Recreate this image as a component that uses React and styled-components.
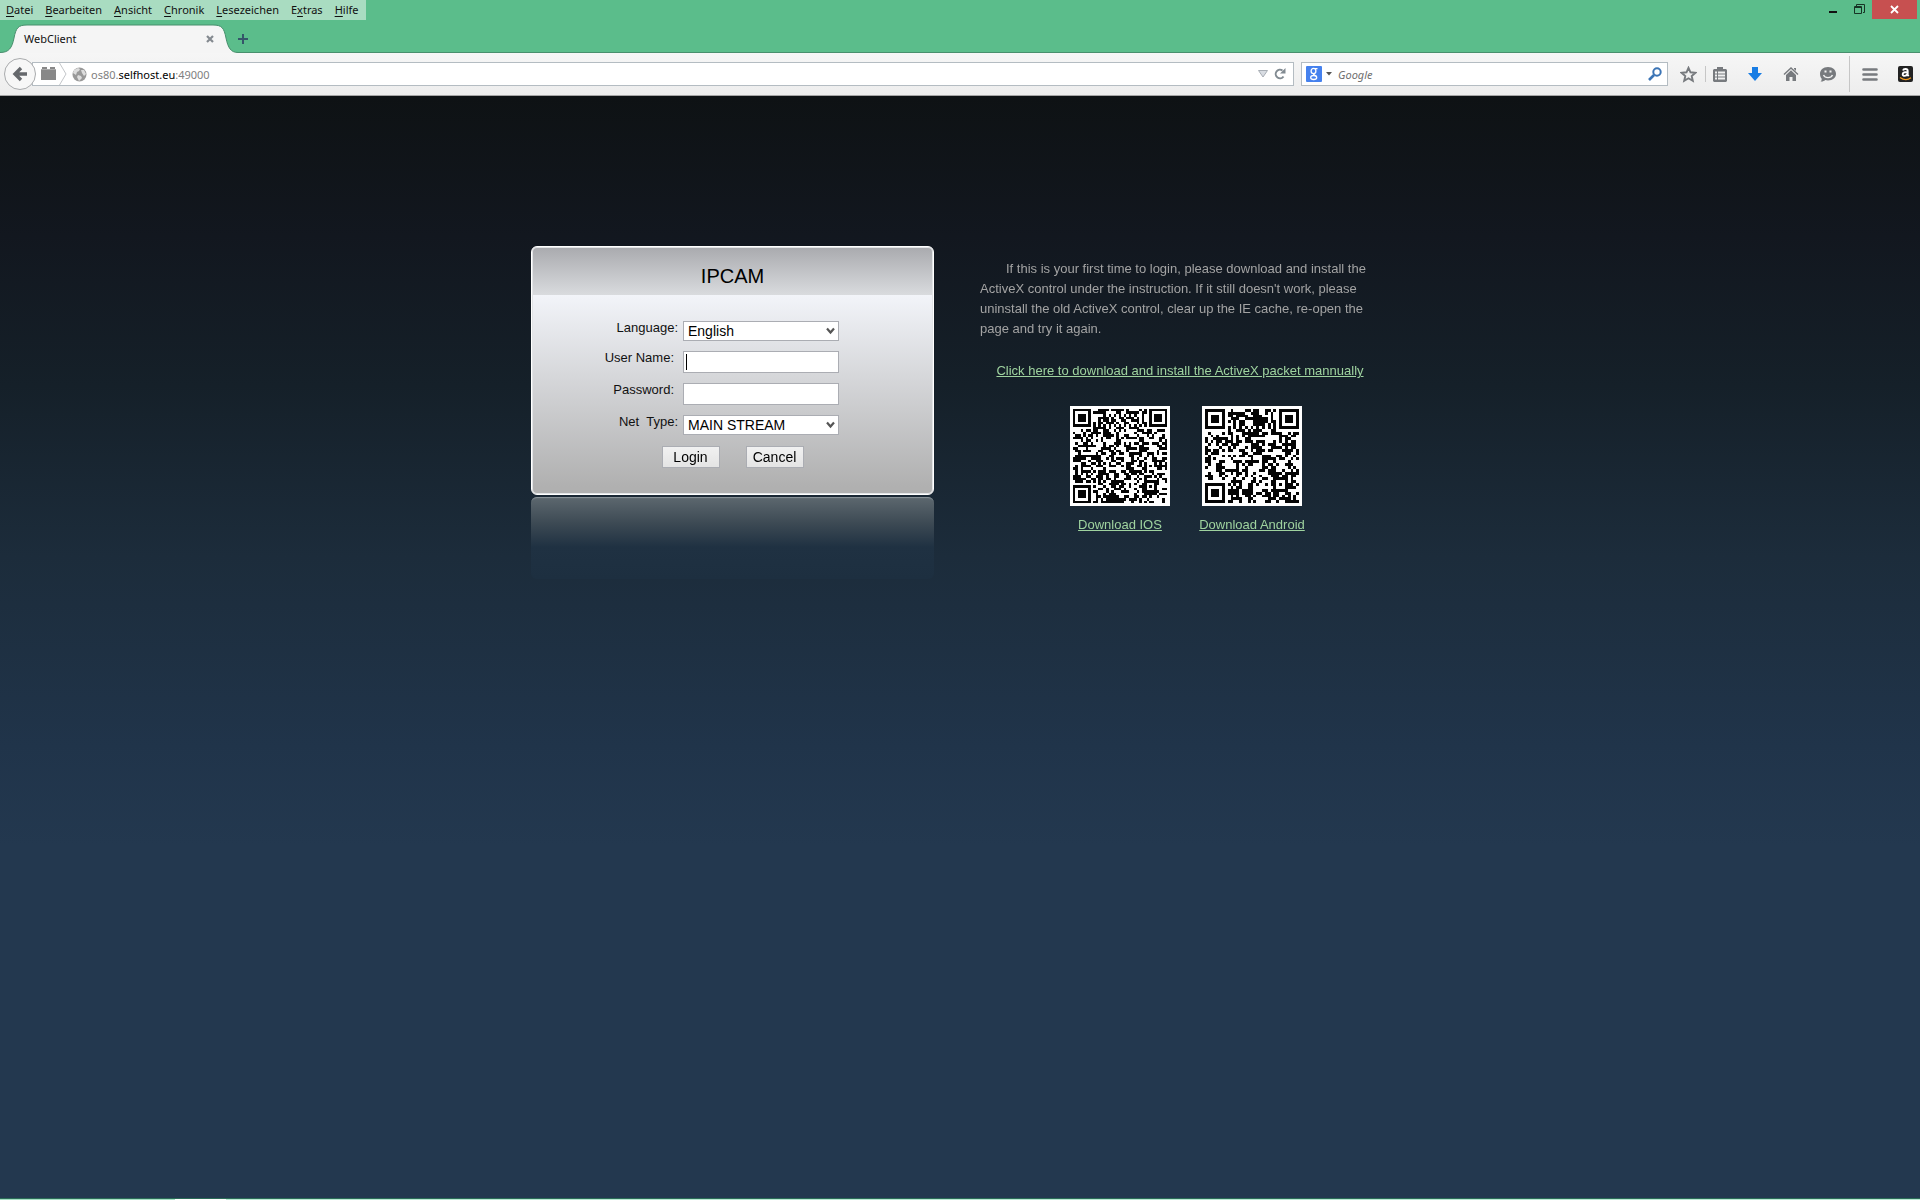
import React from "react";
import styled, { createGlobalStyle } from "styled-components";

const Global = createGlobalStyle`
  * { box-sizing: border-box; }
  html, body, #root { height: 100%; }
  body { margin: 0; font-family: "Liberation Sans", Arial, sans-serif; overflow: hidden; }
  button, input, select { font: inherit; color: inherit; }
  button { background: none; border: 0; padding: 0; }
`;

const Window = styled.div`
  display: flex;
  flex-direction: column;
  height: 100%;
  min-height: 100vh;
`;

const Chrome = styled.header`
  background: #5bbd8b;
  font-family: "Noto Sans", "Open Sans", sans-serif;
  font-size: 12px;
  color: #111;
`;

const TitleRow = styled.div`
  display: flex;
  justify-content: space-between;
  align-items: flex-start;
  height: 24px;
`;

const MenuBar = styled.nav`
  display: flex;
  gap: 12px;
  height: 20px;
  padding: 0 8px 0 6px;
  background: #a9dcc1;
`;

const MenuItem = styled.button`
  font-size: 11px;
  line-height: 20px;
  u { text-underline-offset: 2px; }
`;

const WindowButtons = styled.div`
  display: flex;
  padding-right: 3px;
`;

const WindowButton = styled.button`
  display: grid;
  place-items: center;
  width: ${(p) => (p.$close ? 45 : 26)}px;
  height: 19px;
  background: ${(p) => (p.$close ? "#c75050" : "transparent")};
`;

const TabStrip = styled.div`
  display: flex;
  align-items: center;
  height: 29px;
  box-shadow: inset 0 -1px #488f6d;
`;

const TabBox = styled.div`
  display: grid;
  width: 238px;
  height: 29px;
  > * { grid-area: 1 / 1; }
`;

const TabContent = styled.div`
  display: flex;
  justify-content: space-between;
  align-items: center;
  padding: 0 21px 0 24px;
`;

const TabTitle = styled.button`
  font-size: 11px;
`;

const IconButton = styled.button`
  display: grid;
  place-items: center;
  flex: none;
  width: ${(p) => p.$w || 20}px;
  height: 24px;
`;

const Toolbar = styled.div`
  display: flex;
  align-items: center;
  height: 43px;
  padding-left: 4px;
  background: linear-gradient(#f6f6f6, #ededed);
  border-bottom: 1px solid #a5a5a5;
`;

const BackButton = styled.button`
  display: grid;
  place-items: center;
  flex: none;
  width: 32px;
  height: 32px;
  margin-right: -4px;
  border: 1px solid #a9abad;
  border-radius: 50%;
  background: #f7f7f7;
  z-index: 1;
`;

const Field = styled.div`
  display: flex;
  align-items: center;
  flex: ${(p) => p.$grow};
  min-width: 0;
  height: 24px;
  margin-right: ${(p) => p.$gap}px;
  padding: 0 4px;
  background: #fff;
  border: 1px solid #b4bcc2;
`;

const Address = styled.button`
  flex: 1;
  text-align: left;
  font-size: 11px;
  color: #808080;
  b { font-weight: 400; color: #000; }
`;

const SearchInput = styled.input`
  flex: 1;
  min-width: 0;
  border: 0;
  outline: 0;
  padding: 0 2px;
  background: none;
  font-size: 11px;
  font-style: italic;
  &::placeholder { color: #707070; opacity: 1; }
`;

const Separator = styled.span`
  flex: none;
  width: 1px;
  height: ${(p) => p.$h}px;
  background: #c6c6c6;
`;

const Tools = styled.div`
  display: flex;
  align-items: center;
  flex: none;
  padding-left: 4px;
`;

const Page = styled.main`
  flex: 1;
  display: flex;
  justify-content: center;
  align-items: flex-start;
  gap: 46px;
  padding: 150px 9px 0 0;
  background: linear-gradient(#0e1214 0, #12171f 140px, #152029 290px, #1c2c3b 460px, #20344a 650px, #23384f 750px, #23384f 100%);
`;

const LoginColumn = styled.section`
  width: 403px;
`;

const Card = styled.form`
  height: 249px;
  border: 1px solid #fff;
  border-radius: 6px;
  box-shadow: inset 0 0 0 1px #e2e4e6;
  background: linear-gradient(#a9aaae, #d9dbde) 0 0 / 100% 48px no-repeat,
    linear-gradient(#f2f4f9 48px, #b0b0b0 240px);
`;

const CardTitle = styled.h1`
  margin: 0;
  padding-top: 10px;
  height: 48px;
  font-size: 20px;
  line-height: 38px;
  font-weight: 400;
  text-align: center;
  color: #000;
`;

const Fields = styled.div`
  display: grid;
  grid-template-columns: 146px 156px;
  column-gap: 5px;
  padding-top: 26px;
`;

const Label = styled.label`
  height: ${(p) => p.$h}px;
  padding-right: ${(p) => (p.$inset ? 4 : 0)}px;
  font-size: 13px;
  line-height: 14px;
  text-align: right;
  white-space: pre;
  color: #111;
`;

const TextInput = styled.input`
  width: 156px;
  height: 22px;
  padding: 0 3px;
  border: 1px solid #abadb3;
  border-radius: 0;
  outline: 0;
  background: #fff;
  font-size: 14px;
  &:focus:placeholder-shown {
    caret-color: transparent;
    background: linear-gradient(#000, #000) 2px 2px / 1px 16px no-repeat #fff;
  }
`;

const SelectWrap = styled.div`
  display: grid;
  align-self: start;
  align-items: center;
  height: 20px;
  > * { grid-area: 1 / 1; }
  > svg { justify-self: end; margin-right: 4px; pointer-events: none; }
`;

const Select = styled.select`
  appearance: none;
  width: 156px;
  height: 20px;
  padding: 0 4px;
  border: 1px solid #abadb3;
  border-radius: 0;
  background: #fff;
  font-size: 14px;
  line-height: 18px;
  color: #000;
`;

const Actions = styled.div`
  display: flex;
  justify-content: center;
  gap: 26px;
`;

const Action = styled.button`
  width: 58px;
  height: 22px;
  border: 1px solid #abadb3;
  background: linear-gradient(#f1f1f1, #e4e4e4);
  font-size: 14px;
  line-height: 20px;
  color: #000;
`;

const Reflection = styled.div`
  height: 82px;
  margin-top: 2px;
  border-radius: 6px;
  background: linear-gradient(#5d686f, #3d4a54 26px, #1f3142 50px, #1d2f40);
  box-shadow: inset 0 2px 1px -1px #8b959b;
`;

const Info = styled.section`
  display: flex;
  flex-direction: column;
  align-items: center;
  width: 400px;
  padding-top: 13px;
  font-size: 13px;
`;

const Notice = styled.p`
  margin: 0 0 24px;
  line-height: 20px;
  text-indent: 26px;
  color: #a3a3a3;
`;

const Link = styled.a`
  color: #9fd39f;
  line-height: 16px;
`;

const Downloads = styled.div`
  display: flex;
  gap: 28px;
  padding-top: 27px;
  margin-left: 12px;
`;

const Download = styled.figure`
  display: flex;
  flex-direction: column;
  align-items: center;
  gap: 11px;
  width: 104px;
  margin: 0;
  white-space: nowrap;
`;

const Taskbar = styled.footer`
  height: 2px;
  background: linear-gradient(90deg, #a5e0c4 175px, #fff 175px, #fff 226px, #b9ead3 226px);
  border-top: 1px solid #2a6b57;
`;

const menus = [
  ["", "D", "atei"], ["", "B", "earbeiten"], ["", "A", "nsicht"], ["", "C", "hronik"],
  ["", "L", "esezeichen"], ["E", "x", "tras"], ["", "H", "ilfe"],
];

function finderCell(x, y) {
  const d = Math.max(Math.abs(x - 3), Math.abs(y - 3));
  return d === 3 || d < 2;
}

function buildModules(size, seed) {
  let s = seed;
  const path = [];
  for (let y = 0; y < size; y++) {
    for (let x = 0; x < size; x++) {
      s = (Math.imul(s, 1664525) + 1013904223) >>> 0;
      let on = (s >>> 16) % 100 < 51;
      const fx = x > 7 ? x - (size - 7) : x;
      const fy = y > 7 ? y - (size - 7) : y;
      const inCorner = (x < 8 || x > size - 9) && (y < 8 || y > size - 9) && !(x > 8 && y > 8);
      const a = Math.max(Math.abs(x - (size - 7)), Math.abs(y - (size - 7)));
      if (inCorner) on = fx >= 0 && fy >= 0 && fx < 7 && fy < 7 && finderCell(fx, fy);
      else if (a < 3) on = a !== 1;
      else if (x === 6 || y === 6) on = (x + y) % 2 === 0;
      if (on) path.push(`M${x} ${y}h1v1h-1z`);
    }
  }
  return path.join("");
}

function QrCode({ size, seed, label }) {
  const pad = size === 37 ? 1.15 : 1;
  const full = size + pad * 2;
  return (
    <svg width="100" height="100" viewBox={`${-pad} ${-pad} ${full} ${full}`} role="img" aria-label={label} shapeRendering="crispEdges">
      <rect x={-pad} y={-pad} width={full} height={full} fill="#fff" />
      <path d={buildModules(size, seed)} fill="#050505" />
    </svg>
  );
}

const Chevron = () => (
  <svg width="9" height="8" viewBox="0 0 9 8"><path d="M1 1.5 4.5 5.5 8 1.5" fill="none" stroke="#555" strokeWidth="2.2" /></svg>
);

const keep = (e) => e.preventDefault();

export default function App() {
  return (
    <Window>
      <Global />
      <Chrome>
        <TitleRow>
          <MenuBar>
            {menus.map(([a, k, b]) => (
              <MenuItem key={b}>{a}<u>{k}</u>{b}</MenuItem>
            ))}
          </MenuBar>
          <WindowButtons>
            <WindowButton aria-label="Minimieren"><svg width="10" height="10"><path d="M1 6h8v2H1z" fill="#111" /></svg></WindowButton>
            <WindowButton aria-label="Wiederherstellen">
              <svg width="11" height="11" fill="none" stroke="#173325"><path d="M2.5 2V.5h8v8H9" /><path d="M.5 2.5h7v7h-7zM0 3.5h8" /></svg>
            </WindowButton>
            <WindowButton $close aria-label="Schließen"><svg width="9" height="9"><path d="M1 1l7 7M8 1 1 8" stroke="#fff" strokeWidth="1.8" /></svg></WindowButton>
          </WindowButtons>
        </TitleRow>
        <TabStrip>
          <TabBox>
            <svg width="238" height="29" viewBox="0 0 238 29">
              <path d="M0 28.5C9 28.5 12 24 14 14C16 4 18 1 27 1H213C222 1 224 4 226 14C228 24 231 28.5 238 28.5V29H0z" fill="#f5f5f5" />
              <path d="M0 28.5C9 28.5 12 24 14 14C16 4 18 1 27 1H213C222 1 224 4 226 14C228 24 231 28.5 238 28.5" fill="none" stroke="#488f6d" />
            </svg>
            <TabContent>
              <TabTitle>WebClient</TabTitle>
              <IconButton $w={14} aria-label="Tab schließen"><svg width="8" height="8"><path d="M1 1l6 6M7 1 1 7" stroke="#848a90" strokeWidth="2.2" /></svg></IconButton>
            </TabContent>
          </TabBox>
          <IconButton $w={10} aria-label="Neuer Tab"><svg width="10" height="10"><path d="M5 0v10M0 5h10" stroke="#35566a" strokeWidth="2" /></svg></IconButton>
        </TabStrip>
        <Toolbar>
          <BackButton aria-label="Zurück">
            <svg width="16" height="16" viewBox="0 0 16 16"><path d="M9 2 3 8l6 6M3 8h12" fill="none" stroke="#65686c" strokeWidth="3.4" /></svg>
          </BackButton>
          <Field $grow={1252} $gap={7}>
            <IconButton $w={22} aria-label="Seiteninformationen">
              <svg width="15" height="14"><path d="M0 3h1V0h5v3h3V0h5v3h1v10H0z" fill="#888" /><path d="M0 2.5h15" stroke="#aaa" /></svg>
            </IconButton>
            <svg width="8" height="22"><path d="M.5 0 7 11 .5 22" fill="none" stroke="#c3c6c9" /></svg>
            <IconButton $w={24} aria-label="Website-Identität">
              <svg width="15" height="15" viewBox="0 0 15 15"><circle cx="7.500" cy="7.500" r="7" fill="#999" /><path d="M2 3l4-2 2 1-1 2-2 1-1 3-3-2zM6 8l3 1 1 2-3 3-2-4zM9 3l3 0 2 4-2 2-2-3z" fill="#ddd" /></svg>
            </IconButton>
            <Address>os80.<b>selfhost.eu</b>:49000</Address>
            <IconButton $w={16} aria-label="Verlauf"><svg width="10" height="8"><path d="M.5.5h9L5 7z" fill="#d8dce2" stroke="#a8aeb5" /></svg></IconButton>
            <IconButton $w={18} aria-label="Neu laden">
              <svg width="12" height="12" viewBox="0 0 12 12"><path d="M9.500 8.500A4.300 4.300 0 1 1 8.500 2.500" fill="none" stroke="#818a91" strokeWidth="2" /><path d="M11.500 0v5.500H6z" fill="#818a91" /></svg>
            </IconButton>
          </Field>
          <Field $grow={357} $gap={0}>
            <svg width="16" height="16" viewBox="0 0 16 16">
              <rect width="16" height="16" rx="1" fill="#4581ee" />
              <g fill="none" stroke="#fff" strokeWidth="1.300"><ellipse cx="7.500" cy="5" rx="2.400" ry="2.600" /><path d="M9 2.700h2.500M8.500 7.600c-2.500 1 .9 1.700 1.600 2.700" /><ellipse cx="7.700" cy="11.500" rx="3" ry="2" /></g>
            </svg>
            <IconButton $w={14} aria-label="Suchmaschine"><svg width="6" height="4"><path d="M0 0h6L3 3.500z" fill="#555" /></svg></IconButton>
            <SearchInput aria-label="Suche" placeholder="Google" />
            <IconButton $w={16} aria-label="Suchen">
              <svg width="14" height="14" viewBox="0 0 14 14" fill="none" stroke="#3b74b5"><circle cx="9" cy="5" r="3.700" strokeWidth="2" /><path d="M6 8l-5 5" strokeWidth="2.600" /></svg>
            </IconButton>
          </Field>
          <Tools>
            <IconButton $w={33} aria-label="Lesezeichen hinzufügen">
              <svg width="17" height="17" viewBox="0 0 17 17"><path d="M8.500 1.800l2 4.500 4.900.5-3.700 3.200 1.100 4.900-4.300-2.600-4.300 2.600L5.300 10 1.600 6.800l4.900-.5z" fill="none" stroke="#777a7e" strokeWidth="1.900" /></svg>
            </IconButton>
            <Separator $h={16} />
            <IconButton $w={28} aria-label="Lesezeichen">
              <svg width="14" height="15" viewBox="0 0 14 15"><path d="M1 2h3V0h6v2h3l1 1v11l-1 1H1l-1-1V3z" fill="#777a7e" /><path d="M2 5.500h2m1 0h7M2 8.500h2m1 0h7M2 11.500h2m1 0h7" stroke="#f1f1f1" strokeWidth="2" /></svg>
            </IconButton>
            <IconButton $w={42} aria-label="Downloads"><svg width="14" height="14"><path d="M4 0h6v6h4l-7 8-7-8h4z" fill="#187de4" /></svg></IconButton>
            <IconButton $w={30} aria-label="Startseite">
              <svg width="16" height="14" viewBox="0 0 16 14"><path d="M1 7.500 8 1l7 6.500" fill="none" stroke="#777a7e" strokeWidth="1.400" /><path d="M3 8l5-4.800L13 8v6H9.500v-4h-3v4H3zM11 1h2v3l-2-2z" fill="#777a7e" /></svg>
            </IconButton>
            <IconButton $w={43} aria-label="Chat">
              <svg width="16" height="15" viewBox="0 0 16 15"><path d="M8 0c5 0 8 3 8 6.800S13 13.500 8 13.500c-1 0-2-.1-2.800-.4C4 14.300 2.500 14.800.5 14.500c1-.8 1.300-1.800 1.200-2.800C.5 10.500 0 9 0 6.800 0 3 3 0 8 0z" fill="#777a7e" /><path d="M3.500 8c1.500 3.500 7.500 3.500 9 0" fill="none" stroke="#f1f1f1" strokeWidth="1.400" /><path d="M4.500 3.500h2v2h-2zM9.500 3.500h2v2h-2z" fill="#f1f1f1" /></svg>
            </IconButton>
            <Separator $h={36} />
            <IconButton $w={40} aria-label="Menü">
              <svg width="16" height="13"><path d="M1.500 1.500h13M1.500 6.500h13M1.500 11.500h13" stroke="#777a7e" strokeWidth="2.600" strokeLinecap="round" /></svg>
            </IconButton>
            <IconButton $w={30} aria-label="Amazon">
              <svg width="15" height="16" viewBox="0 0 15 16"><rect width="15" height="16" rx="2" fill="#222" /><path d="M5 4.500c.6-2 4.700-2 4.700.5V9l1 1.200M9.500 6C6 6 4.700 6.800 4.700 8.300c0 2.200 3.500 2 4.800-.3" fill="none" stroke="#fff" strokeWidth="1.900" /><path d="M2 11.500c3.500 2.500 8 2.500 11 .3" fill="none" stroke="#f49a1c" strokeWidth="1.200" /></svg>
            </IconButton>
          </Tools>
        </Toolbar>
      </Chrome>
      <Page>
        <LoginColumn>
          <Card onSubmit={keep}>
            <CardTitle>IPCAM</CardTitle>
            <Fields>
              <Label htmlFor="lang" $h={30}>Language:</Label>
              <SelectWrap><Select id="lang"><option>English</option></Select><Chevron /></SelectWrap>
              <Label htmlFor="user" $h={32} $inset>User Name:</Label>
              <TextInput id="user" placeholder=" " autoFocus />
              <Label htmlFor="pass" $h={32} $inset>Password:</Label>
              <TextInput id="pass" type="password" placeholder=" " />
              <Label htmlFor="net" $h={31}>{"Net  Type:"}</Label>
              <SelectWrap><Select id="net"><option>MAIN STREAM</option></Select><Chevron /></SelectWrap>
            </Fields>
            <Actions>
              <Action type="submit">Login</Action>
              <Action type="reset">Cancel</Action>
            </Actions>
          </Card>
          <Reflection />
        </LoginColumn>
        <Info>
          <Notice>
            If this is your first time to login, please download and install the ActiveX control under the
            instruction. If it still doesn't work, please uninstall the old ActiveX control, clear up the IE
            cache, re-open the page and try it again.
          </Notice>
          <Link href="#activex">Click here to download and install the ActiveX packet mannually</Link>
          <Downloads>
            <Download><QrCode size={37} seed={71} label="QR-Code IOS" /><Link href="#ios">Download IOS</Link></Download>
            <Download><QrCode size={33} seed={1234} label="QR-Code Android" /><Link href="#android">Download Android</Link></Download>
          </Downloads>
        </Info>
      </Page>
      <Taskbar />
    </Window>
  );
}
